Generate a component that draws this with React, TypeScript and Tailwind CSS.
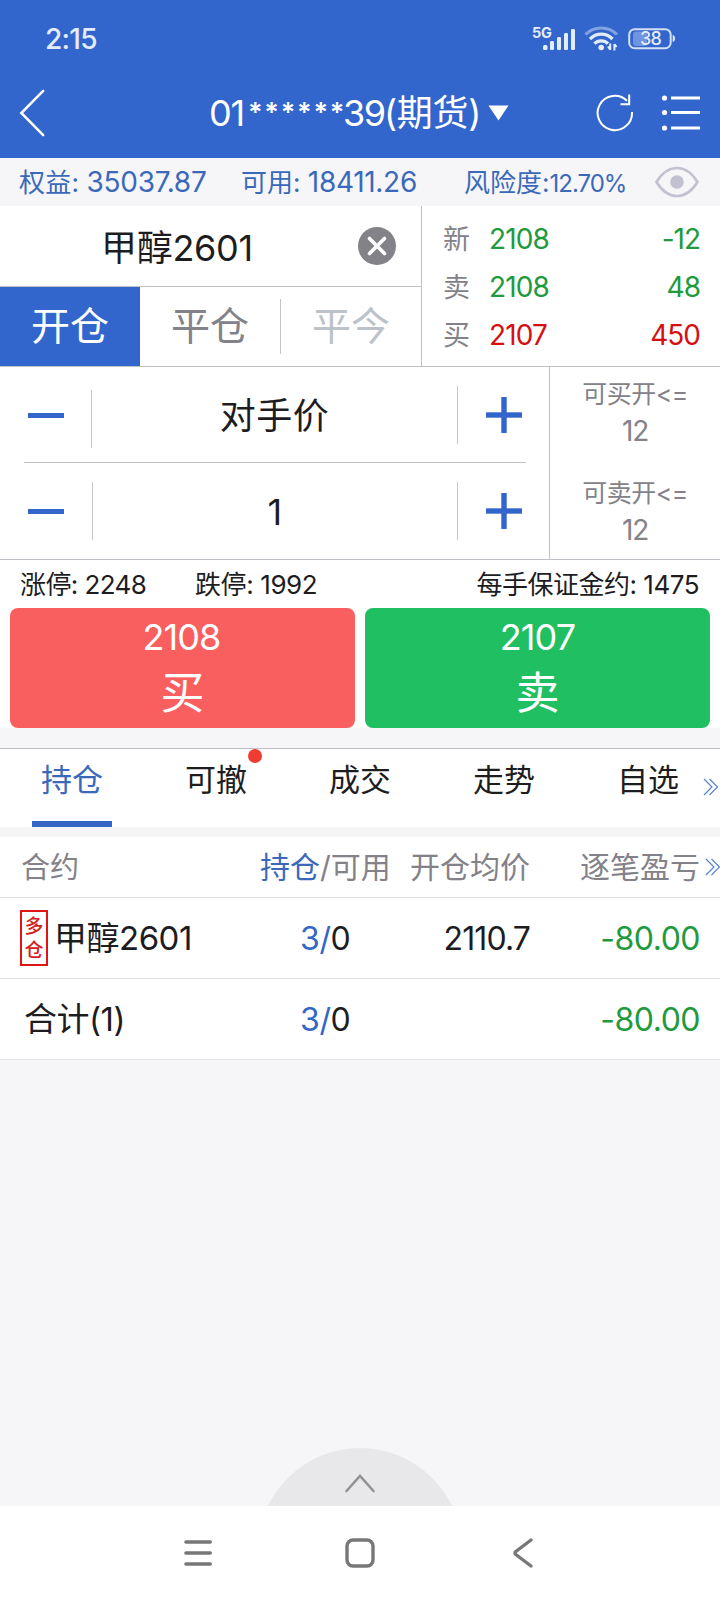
/**
 * Futures trading screen
 *
 * Order ticket on top, open positions below.
 */

import React from 'react';
import { clsx } from 'clsx';

interface Quote {
  label: string;
  price: string;
  volume: string;
  up: boolean;
}

interface PositionRow {
  name: string;
  side?: string[];
  held: string;
  available: string;
  avgPrice?: string;
  profit: string;
}

const quotes: Quote[] = [
  { label: '新', price: '2108', volume: '-12', up: false },
  { label: '卖', price: '2108', volume: '48', up: false },
  { label: '买', price: '2107', volume: '450', up: true },
];

const tabs = ['持仓', '可撤', '成交', '走势', '自选'];

const positions: PositionRow[] = [
  { name: '甲醇2601', side: ['多', '仓'], held: '3', available: '0', avgPrice: '2110.7', profit: '-80.00' },
  { name: '合计(1)', held: '3', available: '0', profit: '-80.00' },
];

function StatusBar() {
  return (
    <div className="flex h-[78px] items-center pl-[45px] pr-[44px] text-[#e3ecfb]">
      <span className="text-[28px] font-medium tracking-[-0.7px]">2:15</span>
      <div className="ml-auto flex items-center">
        <svg width="50" height="30" viewBox="0 0 50 30" fill="currentColor">
          <text x="3" y="14" fontSize="14.500" fontWeight="700" letterSpacing="-0.2">5G</text>
          <rect x="14" y="21" width="4.500" height="5" rx="1.500" />
          <rect x="21" y="17" width="4" height="9" rx="1.300" />
          <rect x="28" y="13" width="4" height="13" rx="1.300" />
          <rect x="35" y="9" width="4" height="17" rx="1.300" />
          <rect x="42" y="5" width="4" height="21" rx="1.300" />
        </svg>
        <svg className="ml-[5px]" width="36" height="28" viewBox="0 0 36 28" fill="none" stroke="currentColor" strokeWidth="3.200">
          <path d="M1.500 9.500C10 0.800 24.500 0.800 33 9.500" opacity="0.45" />
          <path d="M6 14C12.500 7.500 22 7.500 28.500 14" />
          <path d="M10.500 18.700C14 14.900 20.500 14.900 24 18.700" />
          <circle cx="17.200" cy="22.500" r="2.800" fill="currentColor" stroke="none" />
          <path d="M26.200 18.500V25M24 21.500L26.200 24.800M30.400 25.500V19M32.600 22L30.400 19.200" strokeWidth="2" />
        </svg>
        <svg className="ml-[8px]" width="48" height="24" viewBox="0 0 48 24">
          <rect x="5" y="4.500" width="14" height="14.500" rx="3" fill="#7095e0" />
          <rect x="1.200" y="2.200" width="41.500" height="19" rx="5.500" fill="none" stroke="currentColor" strokeWidth="2" opacity="0.9" />
          <path d="M45.200 8.500C47 9.500 47 13.500 45.200 14.500Z" fill="currentColor" stroke="currentColor" />
          <text x="22.500" y="18.200" textAnchor="middle" fontSize="18" fontWeight="500" letterSpacing="-0.8" fill="currentColor">38</text>
        </svg>
      </div>
    </div>
  );
}

function TitleBar() {
  return (
    <div className="flex h-[80px] items-center pb-[10px] pl-[18px] pr-[20px] text-white">
      <svg width="28" height="50" viewBox="0 0 28 50" fill="none" stroke="currentColor" strokeWidth="2.500" strokeLinecap="round">
        <path d="M25.200 2.800L3.300 25L25.200 47.200" />
      </svg>
      <div className="ml-[163px] flex items-center whitespace-nowrap text-[36px] leading-[50px]">
        <span className="w-[39px] tracking-[-1.2px]">01</span>
        <span className="w-[95px] text-[27px] font-semibold tracking-[1.8px]">******</span>
        <span className="w-[41px] tracking-[-1.5px]">39</span>
        <span className="w-[94px] tracking-[-0.3px]">(期货)</span>
        <svg className="ml-[10px]" width="21" height="16" viewBox="0 0 21 16" fill="currentColor">
          <path d="M0.500 0.500H20.500L10.500 15.500Z" />
        </svg>
      </div>
      <svg className="ml-auto" width="38" height="40" viewBox="0 0 38 40" fill="none" stroke="currentColor" strokeWidth="2">
        <path d="M36 19A17.200 17.200 0 1 1 31 7.800" />
        <path d="M24.500 11.200H33.200V1.500" />
      </svg>
      <svg className="ml-[26px]" width="40" height="40" viewBox="0 0 40 40" stroke="currentColor" strokeWidth="3">
        <path d="M11 5H40M11 19.500H40M11 35H40" />
        <g fill="currentColor" stroke="none">
          <circle cx="4.500" cy="5" r="2.600" />
          <circle cx="4.500" cy="19.500" r="2.600" />
          <circle cx="4.500" cy="35" r="2.600" />
        </g>
      </svg>
    </div>
  );
}

function AccountBar() {
  return (
    <div className="flex h-[48px] items-center whitespace-nowrap bg-[#f6f6f9] pl-[19px] text-[#3b69b9]">
      <span className="w-[222px] text-[26px] tracking-[0.2px]">
        权益: <span className="text-[28px] tracking-[-0.3px]">35037.87</span>
      </span>
      <span className="w-[223px] text-[26px]">
        可用: <span className="text-[28px] tracking-[-0.3px]">18411.26</span>
      </span>
      <span className="w-[162px] overflow-hidden text-[26px]">
        风险度:<span className="text-[24px] tracking-[-1px]">12.70%</span>
      </span>
      <svg className="ml-[28px]" width="46" height="34" viewBox="0 0 46 34" fill="none" stroke="#c2c1d1" strokeWidth="2.600">
        <path d="M2.500 17C8 8 14.500 3 23 3C31.500 3 38 8 43.500 17C38 26 31.500 31 23 31C14.500 31 8 26 2.500 17Z" />
        <circle cx="23" cy="17" r="6.800" fill="#c2c1d1" stroke="none" />
      </svg>
    </div>
  );
}

function ContractPanel() {
  return (
    <div className="flex h-[161px] border-b border-[#bfc1c6]">
      <div className="flex w-[422px] flex-col border-r border-[#bfc1c6]">
        <div className="flex h-[81px] items-center border-b border-[#bfc1c6] pl-[101px] pr-[25px]">
          <span className="pt-[3px] text-[36px] tracking-[-0.3px]">甲醇2601</span>
          <svg className="ml-auto" width="38" height="38" viewBox="0 0 38 38">
            <circle cx="19" cy="19" r="19" fill="#838289" />
            <path d="M11.500 11.500L26.500 26.500M26.500 11.500L11.500 26.500" stroke="#fff" strokeWidth="3.600" strokeLinecap="round" />
          </svg>
        </div>
        <div className="flex h-[79px] items-center text-[39px] leading-[77px]">
          <button className="h-[79px] w-[140px] bg-[#3366cc] pb-[2px] text-white">开仓</button>
          <button className="w-[140px] pb-[2px] text-[#838289]">平仓</button>
          <span className="h-[55px] w-px bg-[#c4c6cb]" />
          <button className="flex-1 pb-[2px] text-[#bcc2ca]">平今</button>
        </div>
      </div>
      <div className="flex flex-1 flex-col pl-[21px] pr-[20px] pt-[9px] text-[28px]">
        {quotes.map((quote) => (
          <div key={quote.label} className="flex h-[48px] items-center">
            <span className="w-[46px] pt-[2px] text-[27px] text-[#838289]">{quote.label}</span>
            <span className={clsx('tracking-[-0.9px]', quote.up ? 'text-[#d60f12]' : 'text-[#219a3d]')}>{quote.price}</span>
            <span className={clsx('ml-auto tracking-[-1px]', quote.up ? 'text-[#d60f12]' : 'text-[#219a3d]')}>
              {quote.volume}
            </span>
          </div>
        ))}
      </div>
    </div>
  );
}

function Stepper({ value, dividerClass }: { value: string; dividerClass: string }) {
  return (
    <div className="flex h-[95px] items-center pl-[28px] pr-[27px]">
      <svg width="36" height="36" viewBox="0 0 36 36" fill="#3366cc">
        <rect y="16" width="36" height="5" />
      </svg>
      <span className={clsx('h-[58px] w-px bg-[#c4c6cb]', dividerClass)} />
      <span className="flex-1 pt-[2px] text-center text-[36px] tracking-[0.5px]">{value}</span>
      <span className="mr-[28px] h-[58px] w-px bg-[#c4c6cb]" />
      <svg width="36" height="36" viewBox="0 0 36 36" fill="#3366cc">
        <rect y="15.300" width="36" height="5.400" />
        <rect x="15.300" width="5.400" height="36" />
      </svg>
    </div>
  );
}

function OrderForm() {
  return (
    <div className="flex h-[193px] border-b border-[#bfc1c6]">
      <div className="w-[549px]">
        <Stepper value="对手价" dividerClass="ml-[27px] mt-[8px]" />
        <div className="ml-[24px] mr-[23px] h-px bg-[#bfc1c6]" />
        <Stepper value="1" dividerClass="ml-[28px]" />
      </div>
      <div className="flex flex-1 flex-col border-l border-[#bfc1c6] pt-[9px] text-center text-[25px] leading-[37px] text-[#838289]">
        <div className="h-[99px]">
          <div className="tracking-[-0.5px]">可买开&lt;=</div>
          <div className="text-[28px] tracking-[-1.2px]">12</div>
        </div>
        <div>
          <div className="tracking-[-0.5px]">可卖开&lt;=</div>
          <div className="text-[28px] tracking-[-1.2px]">12</div>
        </div>
      </div>
    </div>
  );
}

function LimitsRow() {
  return (
    <div className="flex h-[48px] items-center pl-[20px] pr-[21px] text-[26px] text-[#1d1d1f]">
      <span className="w-[175px] tracking-[-0.6px]">涨停: 2248</span>
      <span className="tracking-[-0.4px]">跌停: 1992</span>
      <span className="ml-auto tracking-[-0.5px]">每手保证金约: 1475</span>
    </div>
  );
}

function OrderButtons() {
  return (
    <div className="flex h-[120px] gap-[10px] px-[10px] text-white">
      <button className="flex flex-1 flex-col items-center rounded-[8px] bg-[#f95f5f]">
        <span className="h-[57px] pr-[2px] text-[36px] leading-[58px] tracking-[-0.9px]">2108</span>
        <span className="text-[44px] leading-[56px]">买</span>
      </button>
      <button className="flex flex-1 flex-col items-center rounded-[8px] bg-[#20bf62]">
        <span className="h-[57px] text-[36px] leading-[58px] tracking-[-0.9px]">2107</span>
        <span className="text-[44px] leading-[56px]">卖</span>
      </button>
    </div>
  );
}

function More() {
  return (
    <svg width="16" height="18" viewBox="0 0 16 18" fill="none" stroke="#5a83cf" strokeWidth="1.200">
      <path d="M1 1L9 9L1 17M6.500 1L14.500 9L6.500 17" />
    </svg>
  );
}

function TabBar() {
  return (
    <div className="flex h-[79px] border-t border-[#bfc1c6]">
      {tabs.map((tab, index) => (
        <div key={tab} className="relative flex w-[144px] flex-col items-center">
          <span className={clsx('h-[72px] text-[31px] leading-[62px]', index === 0 ? 'text-[#3b69b9]' : 'text-[#1d1d1f]')}>
            {tab}
          </span>
          {index === 0 && <span className="h-[6px] w-[80px] bg-[#3366c5]" />}
          {tab === '可撤' && <span className="absolute left-[104px] top-0 h-[14px] w-[14px] rounded-full bg-[#f13c31]" />}
          {tab === '自选' && (
            <span className="absolute right-[1px] top-[29px]">
              <More />
            </span>
          )}
        </div>
      ))}
    </div>
  );
}

function PositionTable() {
  return (
    <div className="whitespace-nowrap text-[#1d1d1f]">
      <div className="flex h-[61px] items-center border-b border-[#e2e2e5] text-[30px] leading-[59px] text-[#838289]">
        <span className="w-[260px] pl-[21px] text-[29px]">合约</span>
        <span className="w-[132px]">
          <span className="text-[#3b69b9]">持仓</span>/可用
        </span>
        <span className="w-[138px] text-right">开仓均价</span>
        <span className="flex-1 text-right">逐笔盈亏</span>
        <span className="ml-[5px] w-[15px]">
          <More />
        </span>
      </div>
      {positions.map((row) => (
        <div key={row.name} className="flex h-[81px] items-center border-b border-[#e2e2e5] text-[32px]">
          <div className={clsx('flex w-[300px] items-center', row.side ? 'pl-[20px]' : 'pl-[24px]')}>
            {row.side && (
              <span className="mr-[6px] flex h-[56px] w-[28px] flex-col items-center border-2 border-[#e01414] pt-[3px] text-[19px] font-medium leading-[24px] text-[#d62020]">
                {row.side.map((char) => (
                  <span key={char}>{char}</span>
                ))}
              </span>
            )}
            <span className="pt-[2px] text-[33px] tracking-[-0.5px]">{row.name}</span>
          </div>
          <span className="w-[91px] pt-[2px] tracking-[-0.4px]">
            <span className="text-[#3366c5]">{row.held}/</span>
            {row.available}
          </span>
          <span className="w-[139px] pt-[2px] text-right tracking-[-0.9px]">{row.avgPrice}</span>
          <span className="w-[170px] pt-[2px] text-right tracking-[-0.5px] text-[#219a3d]">{row.profit}</span>
        </div>
      ))}
    </div>
  );
}

function NavBar() {
  return (
    <div className="flex h-[94px] items-center bg-white pl-[183px] pr-[186px] text-[#777]">
      <svg width="30" height="30" viewBox="0 0 30 30" stroke="currentColor" strokeWidth="3.600" strokeLinecap="round">
        <path d="M3 4H27.200M3 15H27.200M3 26H27.200" />
      </svg>
      <svg className="ml-[131px]" width="32" height="32" viewBox="0 0 32 32" fill="none" stroke="currentColor" strokeWidth="3.400">
        <rect x="3" y="3" width="26" height="26" rx="6" />
      </svg>
      <svg className="ml-auto" width="22" height="32" viewBox="0 0 22 32" fill="none" stroke="currentColor" strokeWidth="3.400" strokeLinecap="round" strokeLinejoin="round">
        <path d="M19 3L3.800 14.500Q2.200 16 3.800 17.500L19 29" />
      </svg>
    </div>
  );
}

export default function App() {
  return (
    <div className="flex h-[1600px] w-[720px] flex-col overflow-hidden bg-[#f6f6f9] font-['Inter','Noto_Sans_CJK_SC',sans-serif]">
      <header className="bg-[#3366cc]">
        <StatusBar />
        <TitleBar />
      </header>
      <AccountBar />

      {/* Order ticket */}
      <section className="bg-white text-[#1d1d1f]">
        <ContractPanel />
        <OrderForm />
        <LimitsRow />
        <OrderButtons />
      </section>

      {/* Positions */}
      <section className="mt-[20px] bg-white">
        <TabBar />
        <div className="h-[10px] bg-[#f5f5f5]" />
        <PositionTable />
      </section>

      {/* Pull-up handle */}
      <div className="mt-auto flex justify-center">
        <svg width="204" height="58" viewBox="0 0 204 58" fill="none">
          <circle cx="102" cy="102" r="102" fill="#e8e8ea" />
          <path d="M88.500 43L102 28L115.500 43" stroke="#929292" strokeWidth="2.600" strokeLinecap="round" />
        </svg>
      </div>
      <NavBar />
    </div>
  );
}
